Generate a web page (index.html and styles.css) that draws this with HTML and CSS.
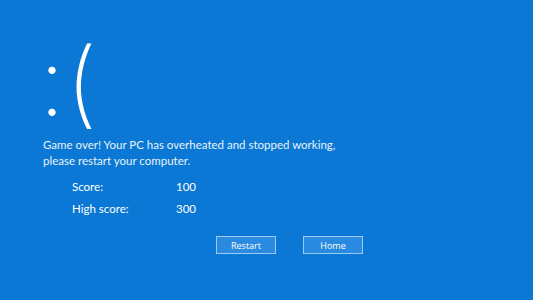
FILE: index.html
```html
<!DOCTYPE html>
<html lang="en">
<head>
    <meta charset="UTF-8">
    <meta name="viewport" content="width=device-width, initial-scale=1.0">
    <title>Game Over</title>
    <link rel="stylesheet" href="styles.css">
</head>
<body>

    <div class="screen">
        <div class="face"><span class="eyes">:</span><span class="mouth">(</span></div>

        <p class="message">
            Game over! Your PC has overheated and stopped working,<br>
            please restart your computer.
        </p>

        <div class="scores">
            <div class="row">
                <span class="label">Score:</span>
                <span class="value">100</span>
            </div>
            <div class="row">
                <span class="label">High score:</span>
                <span class="value">300</span>
            </div>
        </div>

        <div class="buttons">
            <button type="button" class="btn">Restart</button>
            <button type="button" class="btn">Home</button>
        </div>
    </div>

</body>
</html>
```

FILE: styles.css
```css
body {
    margin: 0;
    background-color: #0a78d4;
    font-family: "Open Sans", "Noto Sans", sans-serif;
    color: #ffffff;
}

.screen {
    width: 533px;
    height: 300px;
    padding: 32px 0 0 43px;
    box-sizing: border-box;
}

.face {
    font-family: "Inter", "Open Sans", sans-serif;
    font-size: 94px;
    font-weight: 200;
    line-height: 100px;
    height: 100px;
    margin-left: -4px;
}

.eyes {
    margin-right: 1px;
}

.message {
    margin: 5px 0 0 0;
    font-family: "Lato", "Open Sans", sans-serif;
    font-size: 11.5px;
    line-height: 16px;
    color: #e8f2fb;
}

.scores {
    margin: 7px 0 0 29px;
}

.row {
    display: flex;
    font-family: "Lato", "Open Sans", sans-serif;
    font-size: 11.5px;
    line-height: 22px;
}

.label {
    width: 104px;
}

.buttons {
    display: flex;
    gap: 27px;
    margin: 16px 0 0 173px;
}

.btn {
    width: 60px;
    height: 18px;
    padding: 0;
    background-color: #2a8ae0;
    border: 1px solid #9ccaf2;
    color: #ffffff;
    font-family: "Open Sans", "Noto Sans", sans-serif;
    font-size: 9px;
}
```
